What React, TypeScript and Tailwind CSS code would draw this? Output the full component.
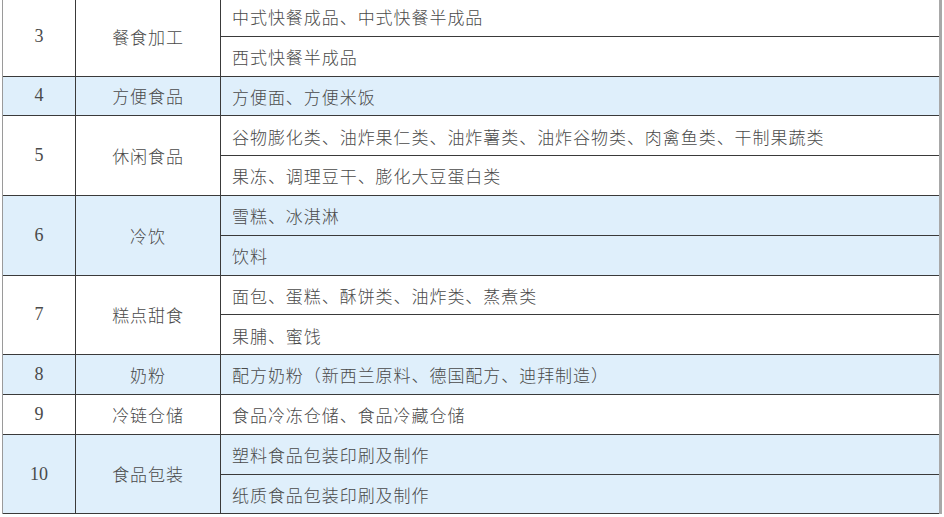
import React from "react";

type Group = { no: string; name: string; items: string[]; blue: boolean };

const groups: Group[] = [
  { no: "3", name: "餐食加工", items: ["中式快餐成品、中式快餐半成品", "西式快餐半成品"], blue: false },
  { no: "4", name: "方便食品", items: ["方便面、方便米饭"], blue: true },
  {
    no: "5",
    name: "休闲食品",
    items: ["谷物膨化类、油炸果仁类、油炸薯类、油炸谷物类、肉禽鱼类、干制果蔬类", "果冻、调理豆干、膨化大豆蛋白类"],
    blue: false,
  },
  { no: "6", name: "冷饮", items: ["雪糕、冰淇淋", "饮料"], blue: true },
  { no: "7", name: "糕点甜食", items: ["面包、蛋糕、酥饼类、油炸类、蒸煮类", "果脯、蜜饯"], blue: false },
  { no: "8", name: "奶粉", items: ["配方奶粉（新西兰原料、德国配方、迪拜制造）"], blue: true },
  { no: "9", name: "冷链仓储", items: ["食品冷冻仓储、食品冷藏仓储"], blue: false },
  { no: "10", name: "食品包装", items: ["塑料食品包装印刷及制作", "纸质食品包装印刷及制作"], blue: true },
];

const cjk = "font-['Noto_Sans_CJK_SC','Noto_Sans',sans-serif] font-light";

export default function App() {
  return (
    <div className="w-[944px] h-[517px] overflow-hidden bg-white">
      <div className="ml-[2px] mt-[-3px] w-[940px] border-l border-r-[3px] border-l-[#9a9a9a] border-r-[#a8a8a8] text-[#4a4a4a]">
        {groups.map((g) => (
          <div key={g.no} className={`flex ${g.blue ? "bg-[#dfeffb]" : "bg-white"}`}>
            <div className="w-[73px] flex items-center justify-center border-r-[1.5px] border-b border-[#3a3a3a] font-['Liberation_Serif',serif] text-[18px]">
              {g.no}
            </div>
            <div
              className={`w-[145px] flex items-center justify-center border-r-[1.5px] border-b border-[#3a3a3a] text-[17px] tracking-[0.9px] ${cjk}`}
            >
              {g.name}
            </div>
            <div className="flex-1 flex flex-col">
              {g.items.map((it, i) => (
                <div
                  key={i}
                  className={`h-[39.8px] flex items-center pl-[11px] pt-[1px] border-b border-[#3a3a3a] text-[17px] tracking-[0.95px] ${cjk}`}
                >
                  {it}
                </div>
              ))}
            </div>
          </div>
        ))}
      </div>
    </div>
  );
}
